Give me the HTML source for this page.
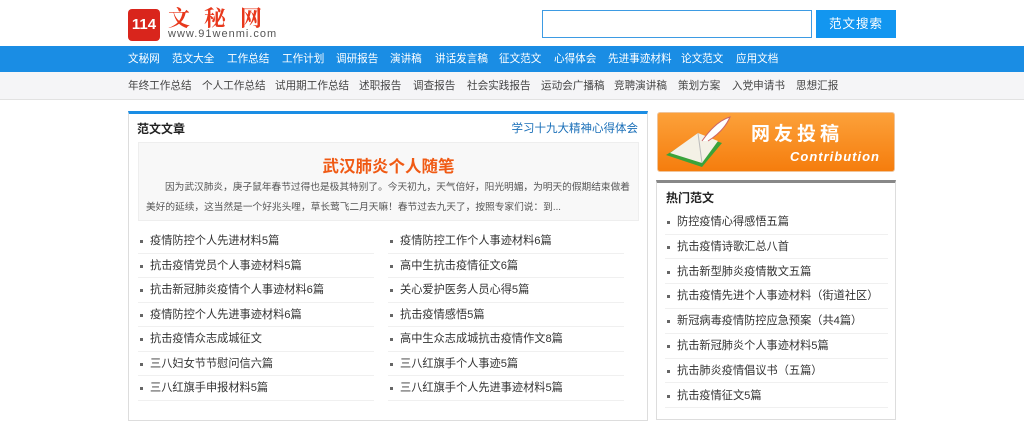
<!DOCTYPE html>
<html><head><meta charset="utf-8"><style>
*{margin:0;padding:0;box-sizing:border-box}
body{width:1024px;height:409px;overflow:hidden;background:#fff;font-family:"Liberation Sans","Noto Sans CJK SC",sans-serif;font-size:12px;color:#333;position:relative}
.abs{position:absolute}
.logo114{left:128px;top:9px;width:32px;height:32px;background:#d9251c;border-radius:4px;color:#fff;font-weight:bold;font-size:15px;line-height:32px;text-align:center}
.logot{left:168px;top:5px;color:#e8381c;font-size:22px;font-weight:bold;letter-spacing:14px;font-family:"Noto Serif CJK SC",serif;line-height:26px}
.url{left:168px;top:28px;font-size:11px;color:#555;letter-spacing:1px}
.search{left:542px;top:10px;width:270px;height:28px;border:1px solid #3d9be3}
.btn{left:816px;top:10px;width:80px;height:28px;background:#1296f0;color:#fff;font-size:12.5px;line-height:28px;text-align:center;letter-spacing:1px}
.nav{left:0;top:46px;width:1024px;height:26px;background:#1a8de4}
.nav span{position:absolute;top:0;color:#fff;font-size:10.6px;line-height:26px;white-space:nowrap}
.sub{left:0;top:72px;width:1024px;height:28px;background:#f5f5f7;border-bottom:1px solid #e2e2e2}
.sub span{position:absolute;top:0;color:#444;font-size:10.6px;line-height:28px;white-space:nowrap}
.lbox{left:128px;top:111px;width:520px;height:310px;border:1px solid #ddd;border-top:3px solid #1a8de4}
.hd{left:137px;top:120px;font-weight:bold;font-size:12px;color:#222}
.hdr{right:386px;top:120px;font-size:11.5px;color:#1a6fb8;white-space:nowrap}
.feat{left:138px;top:142px;width:501px;height:79px;background:#f8f8f8;border:1px solid #eee}
.ft{left:138px;top:153px;width:501px;text-align:center;color:#f05a14;font-size:16.5px;font-weight:bold}
.fp{font-size:9.7px;line-height:20px;color:#555;white-space:nowrap}
.li{position:absolute;height:24.5px;line-height:24px;border-bottom:1px solid #f0f0f0;font-size:11.2px;color:#333;padding-left:12px;white-space:nowrap}
.li:before{content:"";position:absolute;left:2px;top:11px;width:3px;height:3px;background:#666}
.banner{left:657px;top:112px;width:238px;height:60px;border-radius:3px;background:linear-gradient(#fca13a,#f57d0d);border:1px solid #f0c49a}
.rbox{left:656px;top:180px;width:240px;height:240px;border:1px solid #ddd;border-top:3px solid #888}
.rhd{left:666px;top:189px;font-weight:bold;font-size:12px;color:#222}
</style></head><body>
<div class="abs logo114">114</div>
<div class="abs logot">文秘网</div>
<div class="abs url">www.91wenmi.com</div>
<div class="abs search"></div>
<div class="abs btn">范文搜索</div>
<div class="abs nav">
<span style="left:128px">文秘网</span><span style="left:172px">范文大全</span><span style="left:227px">工作总结</span><span style="left:282px">工作计划</span><span style="left:336px">调研报告</span><span style="left:390px">演讲稿</span><span style="left:435px">讲话发言稿</span><span style="left:499px">征文范文</span><span style="left:554px">心得体会</span><span style="left:608px">先进事迹材料</span><span style="left:681px">论文范文</span><span style="left:736px">应用文档</span>
</div>
<div class="abs sub">
<span style="left:128px">年终工作总结</span><span style="left:202px">个人工作总结</span><span style="left:275px">试用期工作总结</span><span style="left:359px">述职报告</span><span style="left:413px">调查报告</span><span style="left:467px">社会实践报告</span><span style="left:541px">运动会广播稿</span><span style="left:614px">竞聘演讲稿</span><span style="left:678px">策划方案</span><span style="left:732px">入党申请书</span><span style="left:796px">思想汇报</span>
</div>
<div class="abs lbox"></div>
<div class="abs hd">范文文章</div>
<div class="abs hdr">学习十九大精神心得体会</div>
<div class="abs feat"></div>
<div class="abs ft">武汉肺炎个人随笔</div>
<div class="abs fp" style="left:165px;top:178px">因为武汉肺炎，庚子鼠年春节过得也是极其特别了。今天初九，天气倍好，阳光明媚，为明天的假期结束做着</div>
<div class="abs fp" style="left:146px;top:198px">美好的延续，这当然是一个好兆头哩，草长莺飞二月天嘛！春节过去九天了，按照专家们说：到...</div>
<div class="li" style="left:138px;top:229px;width:236px">疫情防控个人先进材料5篇</div>
<div class="li" style="left:138px;top:253.5px;width:236px">抗击疫情党员个人事迹材料5篇</div>
<div class="li" style="left:138px;top:278px;width:236px">抗击新冠肺炎疫情个人事迹材料6篇</div>
<div class="li" style="left:138px;top:302.5px;width:236px">疫情防控个人先进事迹材料6篇</div>
<div class="li" style="left:138px;top:327px;width:236px">抗击疫情众志成城征文</div>
<div class="li" style="left:138px;top:351.5px;width:236px">三八妇女节节慰问信六篇</div>
<div class="li" style="left:138px;top:376px;width:236px">三八红旗手申报材料5篇</div>
<div class="li" style="left:388px;top:229px;width:236px">疫情防控工作个人事迹材料6篇</div>
<div class="li" style="left:388px;top:253.5px;width:236px">高中生抗击疫情征文6篇</div>
<div class="li" style="left:388px;top:278px;width:236px">关心爱护医务人员心得5篇</div>
<div class="li" style="left:388px;top:302.5px;width:236px">抗击疫情感悟5篇</div>
<div class="li" style="left:388px;top:327px;width:236px">高中生众志成城抗击疫情作文8篇</div>
<div class="li" style="left:388px;top:351.5px;width:236px">三八红旗手个人事迹5篇</div>
<div class="li" style="left:388px;top:376px;width:236px">三八红旗手个人先进事迹材料5篇</div>
<div class="abs banner">
<svg width="236" height="58" style="position:absolute;left:0;top:0">
<polygon points="8,42 40,22 64,30 44,54" fill="#3aa33a"/>
<polygon points="12,40 40,20 60,28 44,50" fill="#f4f1e6"/>
<line x1="40" y1="20" x2="44" y2="50" stroke="#bbb"/>
<path d="M44 28 Q58 8 72 4 Q66 18 50 28" fill="#fff" stroke="#c66" stroke-width="1"/>
</svg>
<div style="position:absolute;left:93px;top:6px;color:#fff;font-size:19px;font-weight:bold;letter-spacing:4px">网友投稿</div>
<div style="position:absolute;left:132px;top:36px;color:#fff;font-size:13px;font-weight:bold;font-style:italic;letter-spacing:1px">Contribution</div>
</div>
<div class="abs rbox"></div>
<div class="abs rhd">热门范文</div>
<div class="li" style="left:665px;top:210px;width:223px">防控疫情心得感悟五篇</div>
<div class="li" style="left:665px;top:234.8px;width:223px">抗击疫情诗歌汇总八首</div>
<div class="li" style="left:665px;top:259.6px;width:223px">抗击新型肺炎疫情散文五篇</div>
<div class="li" style="left:665px;top:284.4px;width:223px">抗击疫情先进个人事迹材料（街道社区）</div>
<div class="li" style="left:665px;top:309.2px;width:223px">新冠病毒疫情防控应急预案（共4篇）</div>
<div class="li" style="left:665px;top:334px;width:223px">抗击新冠肺炎个人事迹材料5篇</div>
<div class="li" style="left:665px;top:358.8px;width:223px">抗击肺炎疫情倡议书（五篇）</div>
<div class="li" style="left:665px;top:383.6px;width:223px">抗击疫情征文5篇</div>
</body></html>
